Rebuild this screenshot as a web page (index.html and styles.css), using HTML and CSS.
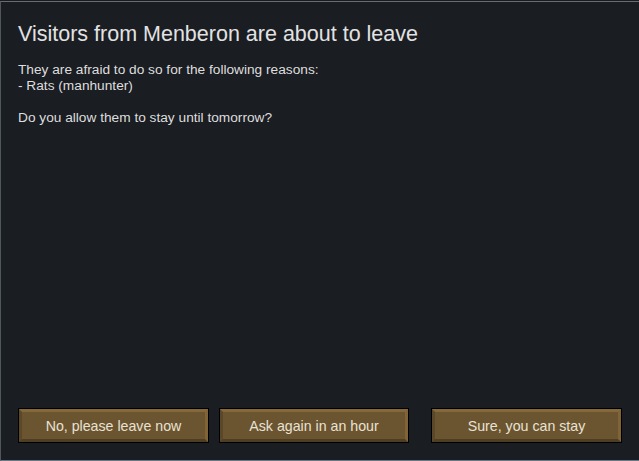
FILE: index.html
```html
<!DOCTYPE html>
<html>
<head>
    <link rel="stylesheet" href="styles.css">
</head>
<body>
    <div id="dialog">
        <div class="dialog_content">
            <div class="title">Visitors from Menberon are about to leave</div>
            <div class="text">
                They are afraid to do so for the following reasons:<br>
                - Rats (manhunter)<br>
                <br>
                Do you allow them to stay until tomorrow?
            </div>
        </div>
        <div class="button_row">
            <div class="btn"><span>No, please leave now</span></div>
            <div class="btn btn_mid"><span>Ask again in an hour</span></div>
            <div class="btn btn_last"><span>Sure, you can stay</span></div>
        </div>
    </div>
</body>
</html>
```

FILE: styles.css
```css
html, body {
    margin: 0;
    padding: 0;
    height: 100%;
    width: 100%;
    background-color: rgb(24,27,31);
    font-family: "Liberation Sans", Arial, sans-serif;
}
#dialog {
    box-sizing: border-box;
    margin-top: 1px;
    height: 460px;
    display: flex;
    flex-direction: column;
    background-color: rgb(26,29,34);
    border-top: 1px solid rgb(104,108,112);
    border-left: 1px solid rgb(80,86,92);
    border-bottom: 1px solid rgb(104,120,134);
}
.dialog_content {
    flex-grow: 1;
    padding: 20px 0 0 17px;
}
.title {
    font-size: 21.5px;
    line-height: 24px;
    color: rgb(226,226,226);
}
.text {
    margin-top: 16px;
    font-size: 13.7px;
    line-height: 16px;
    color: rgb(222,222,222);
}
.button_row {
    display: flex;
    padding: 0 0 17px 17px;
}
.btn {
    width: 191px;
    height: 35px;
    box-sizing: border-box;
    border: 1px solid black;
}
.btn > span {
    display: flex;
    align-items: center;
    justify-content: center;
    box-sizing: border-box;
    height: 100%;
    background-color: rgb(107,84,48);
    border: 3px solid;
    border-color: rgb(134,105,58) rgb(128,100,55) rgb(78,62,35) rgb(90,72,40);
    font-size: 14.2px;
    color: rgb(232,226,212);
}
.btn_mid {
    width: 190px;
    margin-left: 10px;
}
.btn_last {
    margin-left: 22px;
}
```
